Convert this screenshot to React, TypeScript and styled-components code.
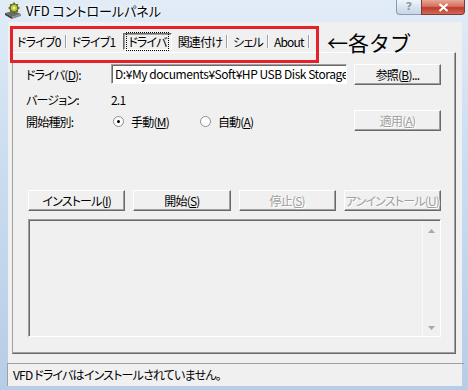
import styled, { createGlobalStyle } from "styled-components";

const GlobalStyle = createGlobalStyle`
  html, body {
    margin: 0;
    padding: 0;
  }
  body {
    width: 468px;
    height: 390px;
    overflow: hidden;
    font-family: "Noto Sans CJK JP", "Liberation Sans", sans-serif;
    font-size: 12px;
    letter-spacing: -0.8px;
    font-feature-settings: "palt";
    color: #000;
  }
`;

const Window = styled.div`
  width: 468px;
  height: 390px;
  display: flex;
  flex-direction: column;
  background: linear-gradient(180deg, #e2ecf7 0%, #cddff1 35%, #b7cde6 100%);
`;

const TitleBar = styled.div`
  height: 22px;
  display: flex;
  align-items: flex-start;
  flex-shrink: 0;
`;

const TitleIcon = styled.svg`
  margin: 2px 4px 0 4px;
  flex-shrink: 0;
`;

const TitleText = styled.div`
  line-height: 21px;
  font-size: 13px;
  letter-spacing: 0;
  text-shadow: 0 0 6px #fff, 0 0 3px #fff;
  flex: 1;
`;

const CaptionButtons = styled.div`
  display: flex;
  margin-right: 3px;
`;

const HelpButton = styled.div`
  width: 25px;
  height: 15px;
  box-sizing: border-box;
  border: 1px solid #8b9bb0;
  border-right: none;
  border-top: none;
  border-radius: 0 0 0 4px;
  background: linear-gradient(180deg, #f1f5fa 0%, #d9e4f0 50%, #c7d6e7 100%);
  color: #8a99ad;
  font-family: "DejaVu Sans", sans-serif;
  font-weight: bold;
  font-size: 11px;
  letter-spacing: 0;
  line-height: 14px;
  text-align: center;
`;

const CloseButton = styled.div`
  width: 44px;
  height: 15px;
  box-sizing: border-box;
  border: 1px solid #7a3b35;
  border-top: none;
  border-radius: 0 0 4px 0;
  background: linear-gradient(180deg, #e8a697 0%, #d4725f 45%, #c0392b 55%, #d16b55 100%);
  display: flex;
  align-items: center;
  justify-content: center;
`;

const Frame = styled.div`
  flex: 1;
  display: flex;
  padding: 0 6px 4px 8px;
`;

const Client = styled.div`
  position: relative;
  flex: 1;
  display: flex;
  flex-direction: column;
  background: #f0f0f0;
`;

const TabStrip = styled.div`
  display: flex;
  align-items: center;
  height: 17px;
  margin: 11px 0 0 6px;
`;

const Tab = styled.div<{ $active?: boolean }>`
  height: 17px;
  box-sizing: border-box;
  padding: 0 2px;
  line-height: 15px;
  white-space: nowrap;
  border: 1px solid transparent;
  ${(p) =>
    p.$active &&
    `
    margin: 0 3px 0 5px;
    border-color: #696969 #fff #fff #696969;
    box-shadow: inset 1px 1px #a0a0a0;
    padding: 0 3px;
    span { outline: 1px dotted #000; outline-offset: 0; padding: 0 1px; }
  `}
`;

const TabSep = styled.div`
  width: 0;
  height: 13px;
  border-left: 1px solid #a0a0a0;
  border-right: 1px solid #fff;
  margin: 0 2px 0 1px;
`;

const Highlight = styled.div`
  position: absolute;
  left: 2px;
  top: 4px;
  width: 309px;
  height: 37px;
  box-sizing: border-box;
  border: 3px solid #e3222c;
  pointer-events: none;
`;

const Callout = styled.div`
  position: absolute;
  left: 319px;
  top: 6px;
  font-size: 21px;
  line-height: 28px;
  letter-spacing: 0;
  font-feature-settings: normal;
  white-space: nowrap;
`;

const Panel = styled.div`
  margin: 2px 6px 0 4px;
  border: 1px solid;
  border-color: #fff #696969 #696969 #a0a0a0;
  box-shadow: inset -1px -1px #a0a0a0;
  padding: 11px 14px 16px 15px;
`;

const FormGrid = styled.div`
  display: grid;
  grid-template-columns: 76px minmax(0, 1fr) 87px;
  grid-auto-rows: 21px;
  column-gap: 7px;
  row-gap: 2px;
  align-items: center;
`;

const Label = styled.div<{ $shift?: number }>`
  white-space: nowrap;
  padding-top: ${(p) => p.$shift ?? 0}px;
  margin-left: -2px;
`;

const Value = styled.div<{ $shift?: number }>`
  grid-column: 2 / 4;
  padding-top: ${(p) => p.$shift ?? 0}px;
`;

const PathInput = styled.div`
  height: 20px;
  box-sizing: border-box;
  border: 1px solid;
  border-color: #a0a0a0 #fff #fff #a0a0a0;
  box-shadow: inset 1px 1px #696969;
  background: #fff;
  padding: 0 3px;
  line-height: 18px;
  letter-spacing: -0.45px;
  white-space: nowrap;
  overflow: hidden;
  align-self: start;
`;

const Button = styled.div<{ $disabled?: boolean }>`
  height: 21px;
  box-sizing: border-box;
  border: 1px solid;
  border-color: #fff #696969 #696969 #fff;
  box-shadow: inset -1px -1px #a0a0a0;
  background: #f0f0f0;
  display: flex;
  align-items: center;
  justify-content: center;
  white-space: nowrap;
  color: ${(p) => (p.$disabled ? "#a0a0a0" : "#000")};
  text-shadow: ${(p) => (p.$disabled ? "1px 1px #fff" : "none")};
`;

const RadioGroup = styled.div`
  display: flex;
  align-items: center;
  padding-top: 2px;
  padding-left: 2px;
`;

const RadioItem = styled.div`
  display: flex;
  align-items: center;
  gap: 7px;
  margin-right: 31px;
  white-space: nowrap;
`;

const RadioDot = styled.div<{ $checked?: boolean }>`
  width: 9px;
  height: 9px;
  border-radius: 50%;
  border: 1px solid #8d8d8d;
  background: #fff;
  display: flex;
  align-items: center;
  justify-content: center;
  &::after {
    content: "";
    width: 3px;
    height: 3px;
    border-radius: 50%;
    background: ${(p) => (p.$checked ? "#000" : "transparent")};
  }
`;

const ActionRow = styled.div`
  display: grid;
  grid-template-columns: repeat(4, 1fr);
  column-gap: 8px;
  margin-top: 59px;
`;

const LogBox = styled.div`
  margin-top: 8px;
  height: 118px;
  box-sizing: border-box;
  border: 1px solid;
  border-color: #a0a0a0 #fff #fff #a0a0a0;
  box-shadow: inset 1px 1px #696969;
  display: flex;
  background: #f0f0f0;
`;

const LogText = styled.div`
  flex: 1;
`;

const ScrollBar = styled.div`
  width: 17px;
  border-left: 1px solid #fafafa;
  margin: 2px 0 0 0;
  display: flex;
  flex-direction: column;
  justify-content: space-between;
`;

const ScrollArrow = styled.div`
  height: 17px;
  display: flex;
  align-items: center;
  justify-content: center;
`;

const StatusBar = styled.div`
  margin-top: auto;
  height: 23px;
  box-sizing: border-box;
  border-top: 1px solid #a0a0a0;
  border-left: 1px solid #a0a0a0;
  margin-left: -1px;
  margin-right: -2px;
  padding-left: 5px;
  line-height: 21px;
  white-space: nowrap;
`;

function Mn({ k }: { k: string }) {
  return (
    <>
      (<u>{k}</u>)
    </>
  );
}

const tabs = ["ドライブ0", "ドライブ1", "ドライバ", "関連付け", "シェル", "About"];
const activeTab = "ドライバ";

function App() {
  return (
    <Window>
      <GlobalStyle />
      <TitleBar>
        <TitleIcon width="18" height="18" viewBox="0 0 18 18">
          <path d="M1 11 L10 9 L17 12 L8 15 Z" fill="#6b6b6b" />
          <path d="M1 11 L8 15 L8 17 L1 13 Z" fill="#3c3c3c" />
          <path d="M8 15 L17 12 L17 14 L8 17 Z" fill="#8a8a8a" />
          <circle cx="10" cy="6" r="4" fill="#b8c43a" stroke="#5c6a18" strokeWidth="1.2" />
          <circle cx="10" cy="6" r="1.4" fill="#eef2b0" />
          <path d="M10 0.5 V2.5 M10 9.5 V11.5 M4.5 6 H6.5 M13.5 6 H15.5 M6.2 2.2 L7.5 3.5 M12.5 8.5 L13.8 9.8 M13.8 2.2 L12.5 3.5 M7.5 8.5 L6.2 9.8" stroke="#5c6a18" strokeWidth="1.6" />
        </TitleIcon>
        <TitleText>VFD コントロールパネル</TitleText>
        <CaptionButtons>
          <HelpButton>?</HelpButton>
          <CloseButton>
            <svg width="11" height="9" viewBox="0 0 11 9">
              <path d="M1.5 1 L9.5 8 M9.5 1 L1.5 8" stroke="#fff" strokeWidth="2.2" />
            </svg>
          </CloseButton>
        </CaptionButtons>
      </TitleBar>
      <Frame>
        <Client>
          <TabStrip>
            {tabs.map((t, i) => {
              const active = t === activeTab;
              const prevActive = tabs[i - 1] === activeTab;
              return (
                <>
                  {i > 0 && !active && !prevActive && <TabSep key={"s" + i} />}
                  <Tab key={t} $active={active}>
                    <span>{t}</span>
                  </Tab>
                </>
              );
            })}
            <TabSep />
          </TabStrip>
          <Panel>
            <FormGrid>
              <Label>
                ドライバ<Mn k="D" />:
              </Label>
              <PathInput>D:¥My documents¥Soft¥HP USB Disk Storage</PathInput>
              <Button>
                参照<Mn k="B" />...
              </Button>
              <Label $shift={3}>バージョン:</Label>
              <Value $shift={3}>2.1</Value>
              <Label $shift={2}>開始種別:</Label>
              <RadioGroup>
                <RadioItem>
                  <RadioDot $checked />
                  <span>
                    手動<Mn k="M" />
                  </span>
                </RadioItem>
                <RadioItem>
                  <RadioDot />
                  <span>
                    自動<Mn k="A" />
                  </span>
                </RadioItem>
              </RadioGroup>
              <Button $disabled>
                適用<Mn k="A" />
              </Button>
            </FormGrid>
            <ActionRow>
              <Button>
                インストール<Mn k="I" />
              </Button>
              <Button>
                開始<Mn k="S" />
              </Button>
              <Button $disabled>
                停止<Mn k="S" />
              </Button>
              <Button $disabled>
                アンインストール<Mn k="U" />
              </Button>
            </ActionRow>
            <LogBox>
              <LogText />
              <ScrollBar>
                <ScrollArrow>
                  <svg width="7" height="4" viewBox="0 0 7 4">
                    <path d="M0 4 L3.5 0 L7 4 Z" fill="#a8a8a8" />
                  </svg>
                </ScrollArrow>
                <ScrollArrow>
                  <svg width="7" height="4" viewBox="0 0 7 4">
                    <path d="M0 0 L3.5 4 L7 0 Z" fill="#a8a8a8" />
                  </svg>
                </ScrollArrow>
              </ScrollBar>
            </LogBox>
          </Panel>
          <StatusBar>VFD ドライバはインストールされていません。</StatusBar>
          <Highlight />
          <Callout>←各タブ</Callout>
        </Client>
      </Frame>
    </Window>
  );
}

export default App;
